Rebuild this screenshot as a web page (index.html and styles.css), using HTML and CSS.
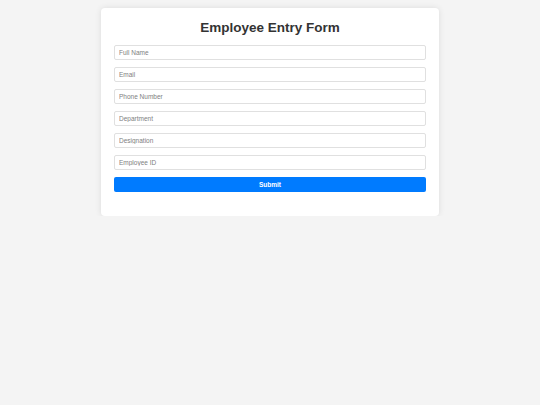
FILE: index.html
```html
<!DOCTYPE html>
<html>
<head>
<meta charset="utf-8">
<title>Employee Entry Form</title>
<link rel="stylesheet" href="styles.css">
</head>
<body>
<div class="card">
  <h1 class="title">Employee Entry Form</h1>
  <form class="form">
    <input class="field" type="text" placeholder="Full Name">
    <input class="field" type="email" placeholder="Email">
    <input class="field" type="text" placeholder="Phone Number">
    <input class="field" type="text" placeholder="Department">
    <input class="field" type="text" placeholder="Designation">
    <input class="field" type="text" placeholder="Employee ID">
    <button class="submit" type="button">Submit</button>
  </form>
</div>
</body>
</html>
```

FILE: styles.css
```css
html, body {
  margin: 0;
  padding: 0;
  background: #f4f4f4;
  font-family: "Liberation Sans", Arial, sans-serif;
}
.card {
  width: 338px;
  box-sizing: border-box;
  margin: 8px auto 0;
  padding: 12px 13px 24px 13px;
  background: #fff;
  border-radius: 4px;
  box-shadow: 0 0 6px rgba(0, 0, 0, 0.1);
}
.title {
  margin: 0 0 9.5px;
  font-size: 13.5px;
  line-height: 15.5px;
  font-weight: bold;
  text-align: center;
  color: #333;
}
.form {
  display: flex;
  flex-direction: column;
  gap: 7px;
}
.field {
  box-sizing: border-box;
  height: 15px;
  width: 100%;
  margin: 0;
  padding: 0 4px;
  border: 1px solid #e0e0e0;
  border-radius: 2px;
  font-family: "Liberation Sans", Arial, sans-serif;
  font-size: 6.5px;
  color: #333;
  background: #fff;
  outline: none;
}
.field::placeholder {
  color: #808080;
}
.submit {
  box-sizing: border-box;
  height: 14.5px;
  width: 100%;
  margin: 0;
  padding: 0;
  border: none;
  border-radius: 2px;
  background: #007bff;
  color: #fff;
  font-family: "Liberation Sans", Arial, sans-serif;
  font-size: 6.5px;
  font-weight: bold;
  cursor: pointer;
}
```
